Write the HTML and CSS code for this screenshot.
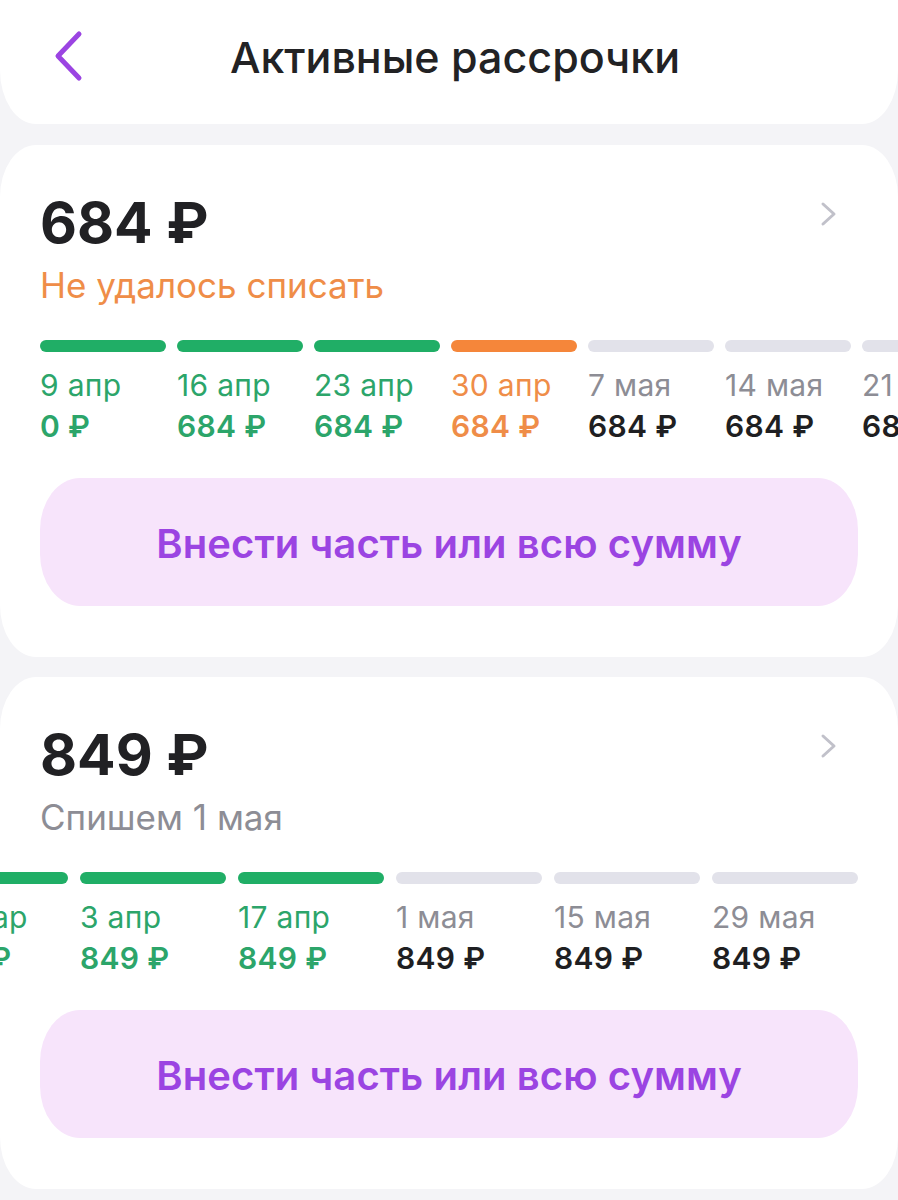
FILE: index.html
```html
<!DOCTYPE html>
<html lang="ru">
  <head>
    <meta charset="UTF-8" />
    <meta name="viewport" content="width=device-width, initial-scale=1.0" />
    <title>Активные рассрочки</title>
    <link rel="stylesheet" href="styles.css">
  </head>
  <body>
    <header class="topbar">
      <a class="back" href="#">
        <svg width="34" height="52" viewBox="0 0 34 52">
          <polyline points="27,4 6,26 27,48" fill="none" stroke="#9b44e2" stroke-width="5" stroke-linecap="round" stroke-linejoin="round" />
        </svg>
      </a>
      <h1>Активные рассрочки</h1>
    </header>

    <main>
      <!-- рассрочка 1 -->
      <article class="card">
        <div class="card-head">
          <div>
            <h2 class="amount">684 ₽</h2>
            <p class="status status-failed">Не удалось списать</p>
          </div>
          <svg class="more" width="18" height="26" viewBox="0 0 18 26">
            <polyline points="3,3 14,13 3,23" fill="none" stroke="#c1c1ca" stroke-width="3" stroke-linecap="round" stroke-linejoin="round" />
          </svg>
        </div>

        <div class="timeline">
          <ul class="track track-weekly">
            <li class="pay paid"><span class="bar"></span><span class="date">9 апр</span><span class="sum">0 ₽</span></li>
            <li class="pay paid"><span class="bar"></span><span class="date">16 апр</span><span class="sum">684 ₽</span></li>
            <li class="pay paid"><span class="bar"></span><span class="date">23 апр</span><span class="sum">684 ₽</span></li>
            <li class="pay failed"><span class="bar"></span><span class="date">30 апр</span><span class="sum">684 ₽</span></li>
            <li class="pay"><span class="bar"></span><span class="date">7 мая</span><span class="sum">684 ₽</span></li>
            <li class="pay"><span class="bar"></span><span class="date">14 мая</span><span class="sum">684 ₽</span></li>
            <li class="pay"><span class="bar"></span><span class="date">21 мая</span><span class="sum">684 ₽</span></li>
            <li class="pay"><span class="bar"></span><span class="date">28 мая</span><span class="sum">684 ₽</span></li>
          </ul>
        </div>

        <button class="pay-btn">Внести часть или всю сумму</button>
      </article>

      <!-- рассрочка 2 -->
      <article class="card">
        <div class="card-head">
          <div>
            <h2 class="amount">849 ₽</h2>
            <p class="status">Спишем 1 мая</p>
          </div>
          <svg class="more" width="18" height="26" viewBox="0 0 18 26">
            <polyline points="3,3 14,13 3,23" fill="none" stroke="#c1c1ca" stroke-width="3" stroke-linecap="round" stroke-linejoin="round" />
          </svg>
        </div>

        <div class="timeline">
          <ul class="track track-biweekly">
            <li class="pay paid"><span class="bar"></span><span class="date">20 мар</span><span class="sum">849 ₽</span></li>
            <li class="pay paid"><span class="bar"></span><span class="date">3 апр</span><span class="sum">849 ₽</span></li>
            <li class="pay paid"><span class="bar"></span><span class="date">17 апр</span><span class="sum">849 ₽</span></li>
            <li class="pay"><span class="bar"></span><span class="date">1 мая</span><span class="sum">849 ₽</span></li>
            <li class="pay"><span class="bar"></span><span class="date">15 мая</span><span class="sum">849 ₽</span></li>
            <li class="pay"><span class="bar"></span><span class="date">29 мая</span><span class="sum">849 ₽</span></li>
          </ul>
        </div>

        <button class="pay-btn">Внести часть или всю сумму</button>
      </article>
    </main>
  </body>
</html>
```

FILE: styles.css
```css
body {
  margin: 0;
  background-color: #f4f4f7;
  font-family: Inter, "Noto Sans", sans-serif;
  color: #212124;
}

.topbar {
  position: relative;
  height: 124px;
  background-color: #fff;
  border-radius: 0 0 36px 36px / 0 0 54px 54px;
  display: flex;
  justify-content: center;
}

.back {
  position: absolute;
  left: 52px;
  top: 30px;
  display: flex;
}

.topbar h1 {
  margin: 0;
  padding: 29px 0 0 12px;
  font-size: 43px;
  line-height: 56px;
  font-weight: 500;
  color: #222224;
}

main {
  display: flex;
  flex-direction: column;
  gap: 20px;
  padding-top: 21px;
}

.card {
  background-color: #fff;
  border-radius: 36px / 52px;
  padding: 46px 40px 51px;
  overflow: hidden;
}

.card-head {
  display: flex;
  justify-content: space-between;
  align-items: flex-start;
}

.more {
  margin-top: 10px;
  margin-right: 20px;
}

.amount {
  margin: 0;
  font-size: 57px;
  line-height: 64px;
  font-weight: 700;
  color: #212124;
}

.status {
  margin: 10px 0 0;
  font-size: 35px;
  line-height: 40px;
  color: #8d8d95;
}

.status-failed {
  color: #ef8d48;
}

.timeline {
  margin: 35px -40px 0;
}

.track {
  list-style: none;
  margin: 0;
  padding: 0 0 0 40px;
  display: flex;
  gap: 11px;
}

.track-biweekly {
  gap: 12px;
  margin-left: -118px;
}

.pay {
  flex: 0 0 126px;
  display: flex;
  flex-direction: column;
}

.track-biweekly .pay {
  flex-basis: 146px;
}

.bar {
  height: 12px;
  border-radius: 6px;
  background-color: #e2e2ea;
}

.date {
  margin-top: 15px;
  font-size: 30px;
  line-height: 36px;
  letter-spacing: 0.3px;
  color: #8d8d95;
  white-space: nowrap;
}

.sum {
  margin-top: 5px;
  font-size: 30px;
  line-height: 36px;
  letter-spacing: 0.3px;
  font-weight: 600;
  color: #1f1f22;
  white-space: nowrap;
}

.paid .bar {
  background-color: #20ae66;
}

.paid .date,
.paid .sum {
  color: #2ca56a;
}

.failed .bar {
  background-color: #f5863a;
}

.failed .date,
.failed .sum {
  color: #ef8d48;
}

.pay-btn {
  display: block;
  width: 100%;
  height: 128px;
  margin-top: 34px;
  padding-top: 4px;
  border: none;
  border-radius: 40px / 52px;
  background-color: #f7e4fb;
  color: #9b44e2;
  font-family: Inter, "Noto Sans", sans-serif;
  font-size: 40px;
  font-weight: 600;
  letter-spacing: 0.1px;
}
```
